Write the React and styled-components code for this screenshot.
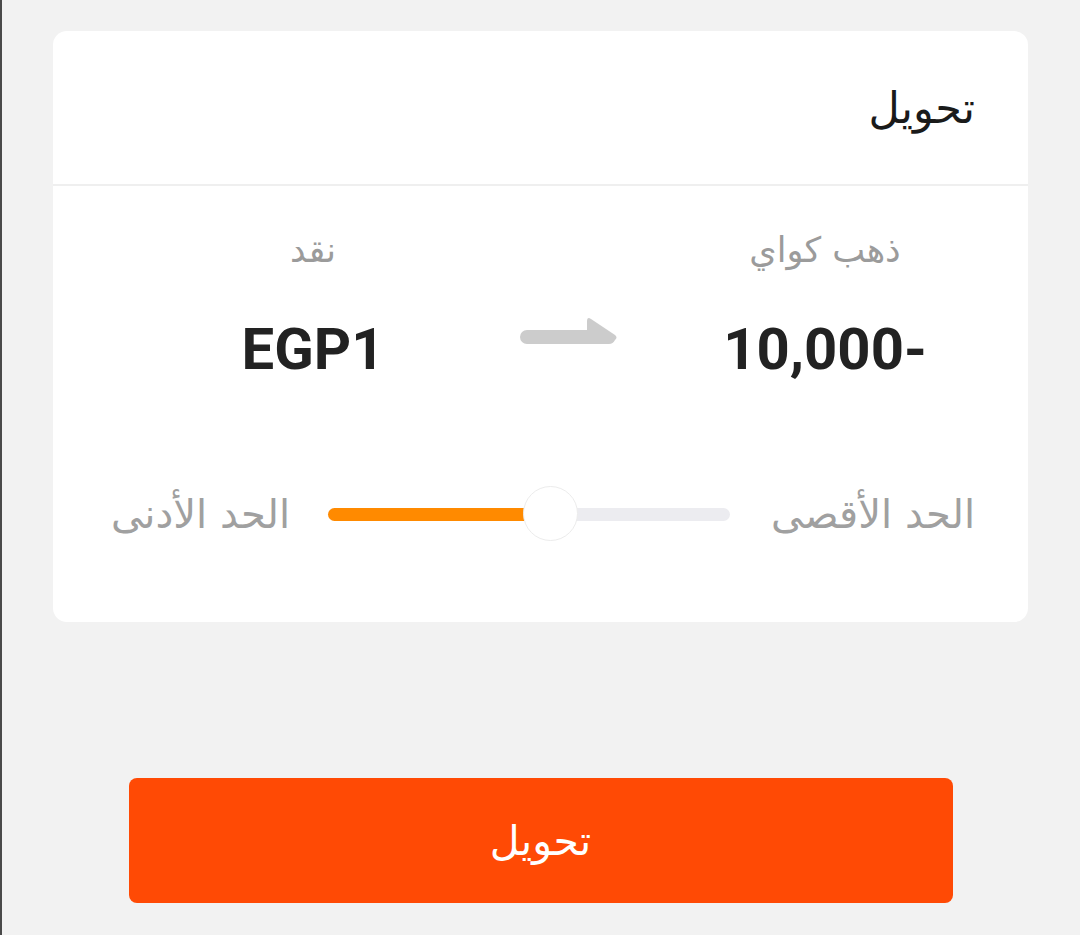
import React from "react";
import styled, { createGlobalStyle } from "styled-components";

const Global = createGlobalStyle`
  html, body { margin: 0; padding: 0; background: #f2f2f2; }
  * { box-sizing: border-box; }
  body { font-family: Roboto, "DejaVu Sans", "Noto Sans", sans-serif; }
`;

const Page = styled.div`
  direction: rtl;
  min-height: 100vh;
  border-left: 2px solid #4a4a4a;
  padding: 31px 52px 0 51px;
  display: flex;
  flex-direction: column;
  align-items: center;
`;

const Card = styled.section`
  width: 975px;
  background: #ffffff;
  border-radius: 14px;
  display: flex;
  flex-direction: column;
`;

const Header = styled.header`
  height: 155px;
  display: flex;
  align-items: center;
  padding: 0 53px;
  border-bottom: 2px solid #efefef;
`;

const Title = styled.h1`
  margin: 0;
  font-family: "DejaVu Sans", sans-serif;
  font-weight: 400;
  font-size: 43px;
  line-height: 60px;
  color: #1a1a1a;
`;

const Body = styled.div`
  height: 436px;
  display: flex;
  flex-direction: column;
`;

const Exchange = styled.div`
  display: flex;
  align-items: flex-start;
  justify-content: flex-start;
  gap: 86px;
  padding: 40px 83px 0 0;
`;

const Column = styled.div`
  width: 240px;
  display: flex;
  flex-direction: column;
  align-items: center;
`;

const Label = styled.div`
  font-family: "DejaVu Sans", sans-serif;
  font-size: 35px;
  line-height: 48px;
  color: #9b9b9b;
`;

const Value = styled.div`
  margin-top: 41px;
  font-family: Roboto, sans-serif;
  font-weight: 700;
  font-size: 58px;
  line-height: 68px;
  color: #222222;
`;

const ArrowBox = styled.div`
  width: 100px;
  padding-top: 89px;
  display: flex;
  justify-content: center;
`;

const SliderRow = styled.div`
  margin-top: 103px;
  display: grid;
  grid-template-columns: 207px 402px 1fr;
  column-gap: 38px;
  align-items: center;
  padding: 0 53px;
`;

const SliderLabel = styled.div`
  font-family: "DejaVu Sans", sans-serif;
  font-size: 40px;
  line-height: 56px;
  color: #a0a0a0;
  white-space: nowrap;
`;

const Track = styled.div`
  position: relative;
  direction: ltr;
  height: 13px;
  border-radius: 7px;
  background: #ececf0;
`;

const Fill = styled.div`
  position: absolute;
  left: 0;
  top: 0;
  bottom: 0;
  border-radius: 7px 0 0 7px;
  background: #ff8a00;
`;

const Thumb = styled.div`
  position: absolute;
  top: 50%;
  width: 55px;
  height: 55px;
  margin-left: -27px;
  margin-top: -28px;
  border-radius: 50%;
  background: #ffffff;
  border: 1.5px solid #ececec;
`;

const Button = styled.button`
  margin-top: 156px;
  width: 824px;
  height: 125px;
  border: none;
  border-radius: 8px;
  background: #ff4a05;
  color: #ffffff;
  font-family: "DejaVu Sans", sans-serif;
  font-size: 41px;
  font-weight: 400;
  cursor: pointer;
`;

const Arrow = () => (
  <svg width="100" height="32" viewBox="0 0 100 32">
    <path
      d="M 8 15 H 68 V 6 Q 68 1.5 72 4 L 96 20 Q 99 22.5 96 25 Q 94 29 90 29 H 8 A 7 7 0 0 1 8 15 Z"
      fill="#cccccc"
    />
  </svg>
);

export default function App() {
  const pct = 55.3;
  return (
    <>
      <Global />
      <Page>
        <Card>
          <Header>
            <Title>تحويل</Title>
          </Header>
          <Body>
            <Exchange>
              <Column>
                <Label>ذهب كواي</Label>
                <Value>-10,000</Value>
              </Column>
              <ArrowBox>
                <Arrow />
              </ArrowBox>
              <Column>
                <Label>نقد</Label>
                <Value>EGP1</Value>
              </Column>
            </Exchange>
            <SliderRow>
              <SliderLabel>الحد الأقصى</SliderLabel>
              <Track>
                <Fill style={{ width: `${pct}%` }} />
                <Thumb style={{ left: `${pct}%` }} />
              </Track>
              <SliderLabel>الحد الأدنى</SliderLabel>
            </SliderRow>
          </Body>
        </Card>
        <Button>تحويل</Button>
      </Page>
    </>
  );
}
